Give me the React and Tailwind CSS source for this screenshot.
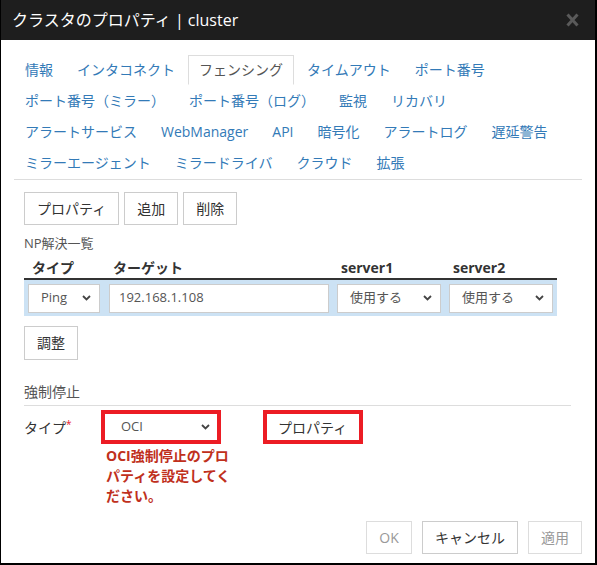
import React from "react";

const tabRows = [
  ["情報", "インタコネクト", "フェンシング", "タイムアウト", "ポート番号"],
  ["ポート番号（ミラー）", "ポート番号（ログ）", "監視", "リカバリ"],
  ["アラートサービス", "WebManager", "API", "暗号化", "アラートログ", "遅延警告"],
  ["ミラーエージェント", "ミラードライバ", "クラウド", "拡張"],
];

function Chevron({ className = "" }) {
  return (
    <svg width="9" height="6" viewBox="0 0 9 6" className={className}>
      <path d="M1 1 L4.5 4.5 L8 1" fill="none" stroke="#444" strokeWidth="1.8" />
    </svg>
  );
}

function Select({ value, className = "" }) {
  return (
    <div className={"flex h-[29px] items-center justify-between border border-[#ccc] bg-white pl-[12px] pr-[8px] text-[13px] text-[#555] " + className}>
      <span>{value}</span>
      <Chevron />
    </div>
  );
}

function Btn({ children, disabled, className = "" }) {
  return (
    <button
      className={
        "h-[33px] border bg-white px-[12px] text-[14px] leading-none whitespace-nowrap " +
        (disabled ? "border-[#ddd] text-[#999] " : "border-[#ccc] text-[#333] ") +
        className
      }
    >
      {children}
    </button>
  );
}

export default function App() {
  return (
    <div className="h-[565px] w-[597px] overflow-hidden border-r-2 border-b-2 border-l border-black bg-white font-[family-name:'Open_Sans','Noto_Sans_CJK_JP',sans-serif]">
      <div className="flex h-10 items-center justify-between bg-[#1e1e1e] pl-[11px] pr-[16px]">
        <span className="text-[16px] text-white">クラスタのプロパティ | cluster</span>
        <svg width="13" height="14" viewBox="0 0 13 14">
          <path d="M1.5 1.5 L11.5 12.5 M11.5 1.5 L1.5 12.5" stroke="#5a5a5a" strokeWidth="3" />
        </svg>
      </div>

      <div className="mx-[13px] mt-[15px] border-b border-[#ddd]">
        {tabRows.map((row, i) => (
          <div key={i} className="flex">
            {row.map((t) => {
              const active = t === "フェンシング";
              return (
                <div
                  key={t}
                  className={
                    "mr-[2px] mb-px h-[30px] border px-[10px] text-[14px] leading-[28px] " +
                    (active ? "border-[#ddd] border-b-transparent text-[#555]" : "border-transparent text-[#337ab7]")
                  }
                >
                  {t}
                </div>
              );
            })}
          </div>
        ))}
      </div>

      <div className="pl-[23px] pr-[38px]">
        <div className="mt-[12px] flex gap-[5px]">
          <Btn>プロパティ</Btn>
          <Btn>追加</Btn>
          <Btn>削除</Btn>
        </div>

        <div className="mt-[9px] text-[13px] leading-[18px] text-[#555]">NP解決一覧</div>

        <div className="mt-[4px] w-[533px]">
          <div className="flex h-[24px] items-center border-b-2 border-[#333] text-[14px] font-bold text-[#333]">
            <div className="w-[81px] pl-[8px]">タイプ</div>
            <div className="w-[228px] pl-[8px]">ターゲット</div>
            <div className="w-[112px] pl-[8px]">server1</div>
            <div className="w-[112px] pl-[8px]">server2</div>
          </div>
          <div className="flex h-[36px] items-center bg-[#cce2f4]">
            <div className="w-[81px] px-[4px]">
              <Select value="Ping" className="w-[72px]" />
            </div>
            <div className="w-[228px] px-[4px]">
              <div className="flex h-[29px] items-center border border-[#ccc] bg-white pl-[9px] text-[13px] text-[#555]">
                192.168.1.108
              </div>
            </div>
            <div className="w-[112px] px-[4px]">
              <Select value="使用する" />
            </div>
            <div className="w-[112px] px-[4px]">
              <Select value="使用する" />
            </div>
          </div>
        </div>

        <Btn className="mt-[10px] h-[34px]">調整</Btn>

        <div className="mt-[22px] mr-[-14px] border-b border-[#ddd] pb-[3px] text-[14px] leading-[20px] text-[#555]">
          強制停止
        </div>

        <div className="mt-[4px] flex">
          <div className="w-[77px] pt-[7px] text-[14px] text-[#333]">
            タイプ<span className="relative -top-[5px] text-[10px] text-[#e8192c]">*</span>
          </div>
          <div className="w-[120px]">
            <div className="flex h-[34px] items-center justify-between border-4 border-[#ec1c24] bg-white pl-[16px] pr-[7px] text-[13px] text-[#555]">
              <span>OCI</span>
              <Chevron />
            </div>
            <div className="mt-[2px] pl-[5px] text-[14px] leading-[20px] font-bold whitespace-nowrap text-[#c0301c]">
              OCI強制停止のプロ
              <br />
              パティを設定してく
              <br />
              ださい。
            </div>
          </div>
          <div className="ml-[42px]">
            <div className="flex h-[34px] w-[100px] items-center border-4 border-[#ec1c24] bg-white pl-[11px] text-[14px] text-[#333]">
              プロパティ
            </div>
          </div>
        </div>
      </div>

      <div className="mt-[15px] flex justify-end gap-[10px] pr-[13px]">
        <Btn disabled className="w-[46px] px-0">OK</Btn>
        <Btn className="w-[96px] px-0">キャンセル</Btn>
        <Btn disabled className="w-[54px] px-0">適用</Btn>
      </div>
    </div>
  );
}
